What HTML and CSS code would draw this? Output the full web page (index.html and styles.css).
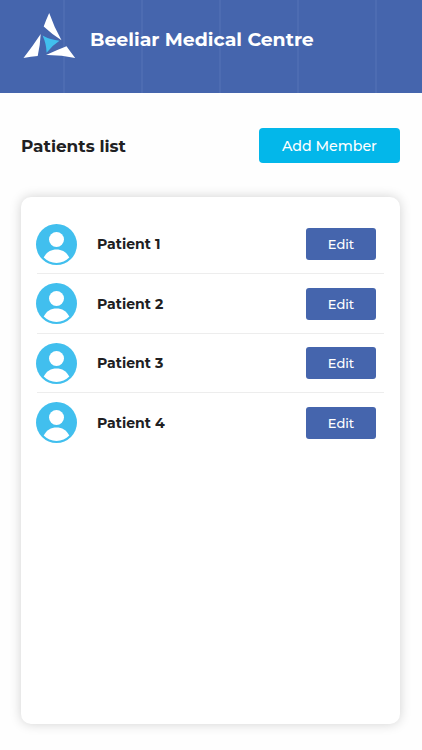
FILE: index.html
```html
<!DOCTYPE html>
<html lang="en">
<head>
  <meta charset="UTF-8" />
  <meta name="viewport" content="width=device-width, initial-scale=1.0"/>
  <title>Beeliar Medical Centre</title>
  <link rel="stylesheet" href="styles.css">
</head>
<body>

  <!-- Header -->
  <header class="header">
    <svg class="logo" viewBox="22 12 54 48">
      <path fill="#fff" d="M49.200 13 Q46 20 43.700 26.600 Q52 34.500 61.500 40.200 Q54 27 49.200 13Z"/>
      <path fill="#fff" d="M40.700 34 Q32.500 46.500 23.500 58 Q31 56.500 37.700 55.900 Q40.200 45 40.700 34Z"/>
      <path fill="#fff" d="M46 55 Q56.500 50.200 66.500 46.300 Q70.500 52 75.200 58 Q61 54.800 46 55Z"/>
      <path fill="#41bfee" d="M42.500 35.500 Q50.500 40 59.500 40.700 Q52 45.500 46.600 52.700 Q46.300 43.500 42.500 35.500Z"/>
    </svg>
    <h1>Beeliar Medical Centre</h1>
  </header>

  <main class="container">
    <div class="top-row">
      <h2>Patients list</h2>
      <button class="add-btn">Add Member</button>
    </div>

    <!-- Patients -->
    <ul class="patient-box">
      <li class="patient">
        <svg class="avatar" viewBox="0 0 41 41"><circle cx="20.500" cy="20.500" r="20.500" fill="#41bfee"/><circle cx="20.500" cy="15.500" r="7.500" fill="#fff"/><path fill="#fff" d="M7.700 33.600 C10.500 28 15 25.500 20.500 25.500 S30.500 28 33.300 33.600 C30 37.200 25.500 39 20.500 39 S11 37.200 7.700 33.600Z"/></svg>
        <span class="name">Patient 1</span>
        <button class="edit-btn">Edit</button>
      </li>
      <li class="patient">
        <svg class="avatar" viewBox="0 0 41 41"><circle cx="20.500" cy="20.500" r="20.500" fill="#41bfee"/><circle cx="20.500" cy="15.500" r="7.500" fill="#fff"/><path fill="#fff" d="M7.700 33.600 C10.500 28 15 25.500 20.500 25.500 S30.500 28 33.300 33.600 C30 37.200 25.500 39 20.500 39 S11 37.200 7.700 33.600Z"/></svg>
        <span class="name">Patient 2</span>
        <button class="edit-btn">Edit</button>
      </li>
      <li class="patient">
        <svg class="avatar" viewBox="0 0 41 41"><circle cx="20.500" cy="20.500" r="20.500" fill="#41bfee"/><circle cx="20.500" cy="15.500" r="7.500" fill="#fff"/><path fill="#fff" d="M7.700 33.600 C10.500 28 15 25.500 20.500 25.500 S30.500 28 33.300 33.600 C30 37.200 25.500 39 20.500 39 S11 37.200 7.700 33.600Z"/></svg>
        <span class="name">Patient 3</span>
        <button class="edit-btn">Edit</button>
      </li>
      <li class="patient">
        <svg class="avatar" viewBox="0 0 41 41"><circle cx="20.500" cy="20.500" r="20.500" fill="#41bfee"/><circle cx="20.500" cy="15.500" r="7.500" fill="#fff"/><path fill="#fff" d="M7.700 33.600 C10.500 28 15 25.500 20.500 25.500 S30.500 28 33.300 33.600 C30 37.200 25.500 39 20.500 39 S11 37.200 7.700 33.600Z"/></svg>
        <span class="name">Patient 4</span>
        <button class="edit-btn">Edit</button>
      </li>
    </ul>
  </main>

</body>
</html>
```
FILE: styles.css
```css
* {
  box-sizing: border-box;
}

body {
  margin: 0;
  height: 750px;
  display: flex;
  flex-direction: column;
  background: #fefefe;
  color: #202022;
  font-family: Montserrat, Inter, sans-serif;
}

h1, h2 {
  margin: 0;
  font-weight: 700;
  white-space: nowrap;
}

/* faint vertical lines every 78px */
.header {
  height: 93px;
  padding: 12px 22px 0;
  display: flex;
  align-items: flex-start;
  gap: 14px;
  background: #4565ad repeating-linear-gradient(90deg, transparent 0 63px, #4d6cb2 63px 65px, transparent 65px 78px);
}

.logo {
  width: 54px;
  height: 48px;
}

h1 {
  color: #fff;
  font-size: 18.9px;
  line-height: 55px;
}

.container {
  flex: 1;
  display: flex;
  flex-direction: column;
  padding: 35px 22px 26px 21px;
}

.top-row {
  display: flex;
  justify-content: space-between;
  align-items: center;
  height: 35px;
  margin-bottom: 34px;
}

h2 {
  font-size: 16.9px;
}

button {
  border: none;
  padding: 0;
  color: #fff;
  font-family: inherit;
  cursor: pointer;
}

.add-btn {
  width: 141px;
  height: 35px;
  border-radius: 4px;
  background: #03b7ea;
  font-size: 14.2px;
  font-weight: 500;
}

.patient-box {
  flex: 1;
  margin: 0;
  padding: 17.5px 16px 0;
  list-style: none;
  background: #fff;
  border-radius: 10px;
  box-shadow: 0 0 12px rgba(0, 0, 0, 0.18);
}

.patient {
  display: flex;
  align-items: center;
  height: 59.5px;
  padding: 1px 8px 0 0;
  border-bottom: 1px solid #ededed;
}

.patient:last-child {
  border-bottom-color: transparent;
}

.avatar {
  width: 41px;
  height: 41px;
  margin-left: -1px;
}

.name {
  flex: 1;
  margin-left: 20px;
  font-size: 14.1px;
  font-weight: 700;
}

.edit-btn {
  width: 70px;
  height: 32px;
  border-radius: 3px;
  background: #4565ad;
  font-size: 13px;
  font-weight: 500;
}
```
